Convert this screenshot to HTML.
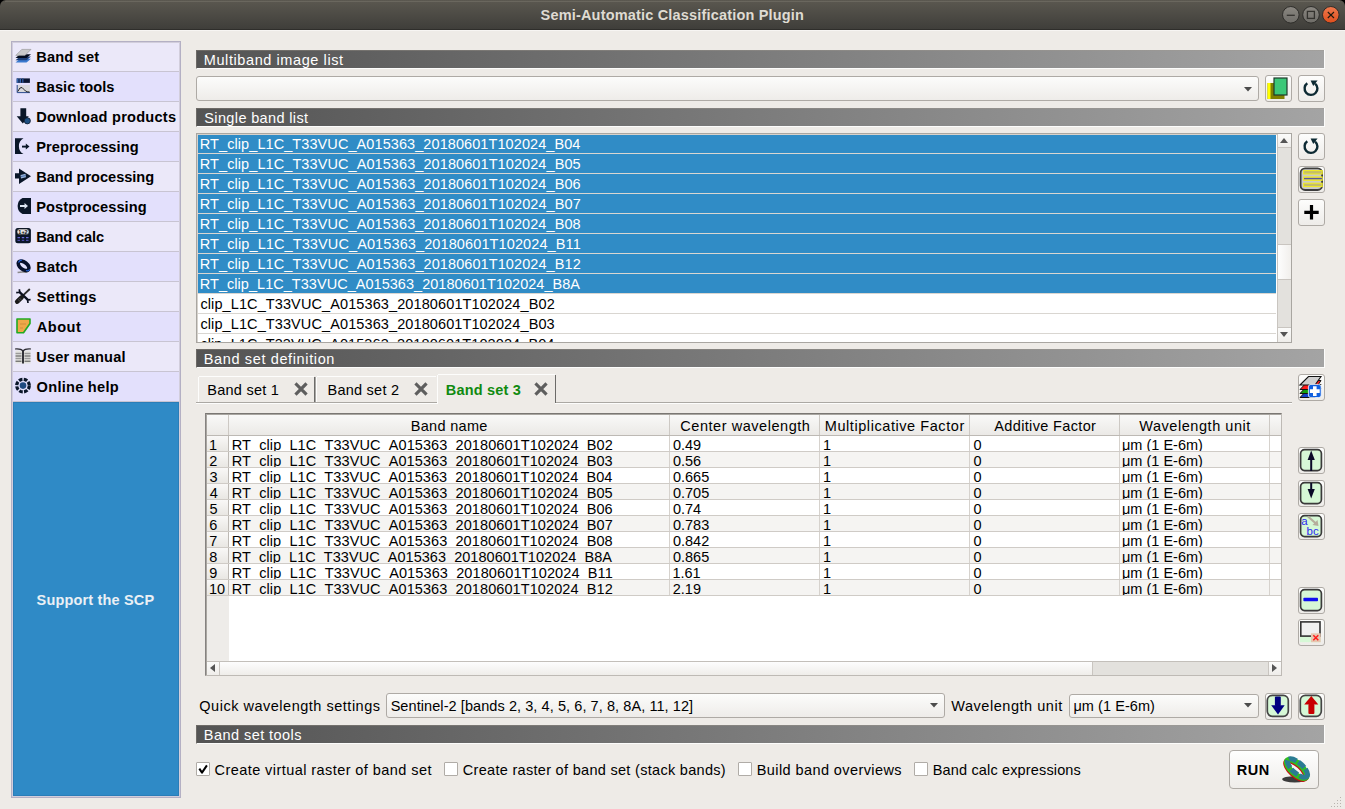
<!DOCTYPE html>
<html><head><meta charset="utf-8"><title>Semi-Automatic Classification Plugin</title>
<style>
html,body{margin:0;padding:0;}
body{width:1345px;height:809px;position:relative;overflow:hidden;background:#eeebe7;font-family:"Liberation Sans",sans-serif;}
.r{position:absolute;}
.t{position:absolute;white-space:nowrap;}
svg.r{overflow:visible;}
</style></head><body>
<div class="r" style="left:0px;top:0px;width:1345px;height:29px;background:linear-gradient(#5b5850,#3f3e3a);border-radius:6px 6px 0 0;"></div>
<div class="r" style="left:0px;top:0px;width:7px;height:7px;background:#000;z-index:-1;"></div>
<div class="r" style="left:1338px;top:0px;width:7px;height:7px;background:#000;z-index:-1;"></div>
<div class="r" style="left:0px;top:29px;width:1345px;height:1px;background:#2f2e2b;"></div>
<div class="r" style="left:0px;top:30px;width:1345px;height:1px;background:#f7f5f3;"></div>
<div class="t" style="left:540.58px;top:6.88px;font-size:14.5px;line-height:16.20px;color:#dfdbd2;font-weight:bold;letter-spacing:0.180px;">Semi-Automatic Classification Plugin</div>
<svg class="r" style="left:1280px;top:4px" width="62" height="22" viewBox="0 0 62 22"><defs><linearGradient id="gg" x1="0" y1="0" x2="0" y2="1"><stop offset="0" stop-color="#8a8781"/><stop offset="1" stop-color="#6e6c67"/></linearGradient><linearGradient id="og" x1="0" y1="0" x2="0" y2="1"><stop offset="0" stop-color="#f07a4e"/><stop offset="1" stop-color="#de4e1c"/></linearGradient></defs><circle cx="10.8" cy="10.8" r="8.3" fill="url(#gg)" stroke="#2e2d2a" stroke-width="1"/><circle cx="31" cy="10.8" r="8.3" fill="url(#gg)" stroke="#2e2d2a" stroke-width="1"/><circle cx="50.8" cy="10.8" r="8.3" fill="url(#og)" stroke="#2e2d2a" stroke-width="1"/><line x1="6.8" y1="11.3" x2="14.8" y2="11.3" stroke="#34332f" stroke-width="1.3"/><rect x="27.4" y="7.4" width="7" height="7" fill="none" stroke="#34332f" stroke-width="1.3"/><path d="M47.8 8 L54 14 M54 8 L47.8 14" stroke="#1e1a10" stroke-width="1.1"/><circle cx="50.9" cy="11" r="1" fill="#1e1a10"/></svg>
<div class="r" style="left:5px;top:1px;width:1335px;height:1px;background:#6a675e;"></div>
<div class="r" style="left:11px;top:41px;width:170px;height:757px;background:#d2cedc;border:1px solid #b4b0c4;box-sizing:border-box;"></div>
<div class="r" style="left:13px;top:402px;width:166px;height:394px;background:#2f8ac6;border:1px solid #2a7db8;box-sizing:border-box;"></div>
<div class="r" style="left:13px;top:43px;width:166px;height:28px;background:#ebe8f9;"></div>
<div class="r" style="left:13px;top:71px;width:166px;height:1px;background:#c8c4d2;"></div>
<div class="t" style="left:36.22px;top:48.79px;font-size:14.6px;line-height:16.31px;color:#000;font-weight:bold;letter-spacing:0.185px;">Band set</div>
<div class="r" style="left:13px;top:72px;width:166px;height:29px;background:#e3e0fc;"></div>
<div class="r" style="left:13px;top:101px;width:166px;height:1px;background:#c8c4d2;"></div>
<div class="t" style="left:36.22px;top:78.79px;font-size:14.6px;line-height:16.31px;color:#000;font-weight:bold;letter-spacing:0.038px;">Basic tools</div>
<div class="r" style="left:13px;top:102px;width:166px;height:29px;background:#ebe8f9;"></div>
<div class="r" style="left:13px;top:131px;width:166px;height:1px;background:#c8c4d2;"></div>
<div class="t" style="left:36.22px;top:108.79px;font-size:14.6px;line-height:16.31px;color:#000;font-weight:bold;letter-spacing:0.226px;">Download products</div>
<div class="r" style="left:13px;top:132px;width:166px;height:29px;background:#e3e0fc;"></div>
<div class="r" style="left:13px;top:161px;width:166px;height:1px;background:#c8c4d2;"></div>
<div class="t" style="left:36.22px;top:138.79px;font-size:14.6px;line-height:16.31px;color:#000;font-weight:bold;letter-spacing:0.085px;">Preprocessing</div>
<div class="r" style="left:13px;top:162px;width:166px;height:29px;background:#ebe8f9;"></div>
<div class="r" style="left:13px;top:191px;width:166px;height:1px;background:#c8c4d2;"></div>
<div class="t" style="left:36.22px;top:168.79px;font-size:14.6px;line-height:16.31px;color:#000;font-weight:bold;letter-spacing:-0.036px;">Band processing</div>
<div class="r" style="left:13px;top:192px;width:166px;height:29px;background:#e3e0fc;"></div>
<div class="r" style="left:13px;top:221px;width:166px;height:1px;background:#c8c4d2;"></div>
<div class="t" style="left:36.22px;top:198.79px;font-size:14.6px;line-height:16.31px;color:#000;font-weight:bold;letter-spacing:0.071px;">Postprocessing</div>
<div class="r" style="left:13px;top:222px;width:166px;height:29px;background:#ebe8f9;"></div>
<div class="r" style="left:13px;top:251px;width:166px;height:1px;background:#c8c4d2;"></div>
<div class="t" style="left:36.22px;top:228.79px;font-size:14.6px;line-height:16.31px;color:#000;font-weight:bold;letter-spacing:-0.146px;">Band calc</div>
<div class="r" style="left:13px;top:252px;width:166px;height:29px;background:#e3e0fc;"></div>
<div class="r" style="left:13px;top:281px;width:166px;height:1px;background:#c8c4d2;"></div>
<div class="t" style="left:36.22px;top:258.79px;font-size:14.6px;line-height:16.31px;color:#000;font-weight:bold;letter-spacing:0.179px;">Batch</div>
<div class="r" style="left:13px;top:282px;width:166px;height:29px;background:#ebe8f9;"></div>
<div class="r" style="left:13px;top:311px;width:166px;height:1px;background:#c8c4d2;"></div>
<div class="t" style="left:36.78px;top:288.79px;font-size:14.6px;line-height:16.31px;color:#000;font-weight:bold;letter-spacing:0.289px;">Settings</div>
<div class="r" style="left:13px;top:312px;width:166px;height:29px;background:#e3e0fc;"></div>
<div class="r" style="left:13px;top:341px;width:166px;height:1px;background:#c8c4d2;"></div>
<div class="t" style="left:36.84px;top:318.79px;font-size:14.6px;line-height:16.31px;color:#000;font-weight:bold;letter-spacing:0.445px;">About</div>
<div class="r" style="left:13px;top:342px;width:166px;height:29px;background:#ebe8f9;"></div>
<div class="r" style="left:13px;top:371px;width:166px;height:1px;background:#c8c4d2;"></div>
<div class="t" style="left:36.32px;top:348.79px;font-size:14.6px;line-height:16.31px;color:#000;font-weight:bold;letter-spacing:0.157px;">User manual</div>
<div class="r" style="left:13px;top:372px;width:166px;height:29px;background:#e3e0fc;"></div>
<div class="r" style="left:13px;top:401px;width:166px;height:1px;background:#c8c4d2;"></div>
<div class="t" style="left:36.60px;top:378.79px;font-size:14.6px;line-height:16.31px;color:#000;font-weight:bold;letter-spacing:0.260px;">Online help</div>
<div class="t" style="left:36.58px;top:591.88px;font-size:14.5px;line-height:16.20px;color:#eaf0f5;font-weight:bold;letter-spacing:0.166px;">Support the SCP</div>
<svg class="r" style="left:15px;top:48px" width="16" height="16" viewBox="0 0 16 16"><path d="M0.5 14.5 L5 10.8 H16 L11.5 14.5 Z" fill="#3a7ad0"/><path d="M0.5 12.3 L5 8.6 H16 L11.5 12.3 Z" fill="#1d3f78"/><path d="M0.5 10 L5 6.3 H16 L11.5 10 Z" fill="#040c1e"/><path d="M0.8 7.4 L6.8 1.4 H16 L10 7.4 Z" fill="#cacaca" stroke="#8e8e8e" stroke-width="0.6"/></svg>
<svg class="r" style="left:15px;top:78px" width="16" height="16" viewBox="0 0 16 16"><rect x="1.7" y="0.4" width="13.2" height="4.5" fill="#0a1530"/><rect x="1.7" y="0.4" width="1.8" height="4.5" fill="#3566b0"/><rect x="4.5" y="0.4" width="1.5" height="4.5" fill="#3566b0"/><rect x="7" y="0.4" width="1.5" height="4.5" fill="#2a5090"/><rect x="1.7" y="7" width="13.2" height="8" fill="#d8d8dc"/><path d="M2.2 7 V14.6 H14.9" fill="none" stroke="#2a4a90" stroke-width="1"/><path d="M2.8 13.5 Q5 8.5 7 9.5 Q9 11.5 10.5 13 Q12 14 14.5 14" fill="none" stroke="#111" stroke-width="0.9"/></svg>
<svg class="r" style="left:15px;top:108px" width="16" height="16" viewBox="0 0 16 16"><path d="M5.4 0.2 H11.2 V8.2 H13.8 L7.8 15.4 L1.7 8.2 H5.4 Z" fill="#0a1628"/><circle cx="12.3" cy="12.8" r="3.1" fill="#1f4f82" stroke="#0a1628" stroke-width="0.8"/></svg>
<svg class="r" style="left:15px;top:138px" width="16" height="16" viewBox="0 0 16 16"><path d="M0 0.3 H8.5 A9 9 0 0 0 8.5 16 H0 Z" fill="#0a1628"/><path d="M7 8.6 H11.5" stroke="#0a1628" stroke-width="1.9"/><path d="M10.8 5.6 L14.5 8.6 L10.8 11.6 Z" fill="#0a1628"/></svg>
<svg class="r" style="left:15px;top:168px" width="16" height="16" viewBox="0 0 16 16"><path d="M0 5.3 H4 V0.4 L16 8.2 L4 16 V10.4 H0 Z" fill="#0a1628"/><path d="M5.5 7 L10.5 5.8 L11 9.2 L6 10.4 Z" fill="#9ab4d8"/><path d="M6 8.6 L10.8 7.5" stroke="#3a64a8" stroke-width="0.8"/></svg>
<svg class="r" style="left:15px;top:198px" width="16" height="16" viewBox="0 0 16 16"><path d="M7.5 0 H16 V16 H7.5 A9 9 0 0 1 7.5 0 Z" fill="#0a1628"/><path d="M5 8 H10" stroke="#dde6f4" stroke-width="2"/><path d="M9.5 5 L13 8 L9.5 11 Z" fill="#dde6f4"/></svg>
<svg class="r" style="left:15px;top:228px" width="16" height="16" viewBox="0 0 16 16"><rect x="0.3" y="0" width="15.6" height="15.3" rx="2.5" fill="#0a1628"/><rect x="2" y="1" width="12" height="5.6" rx="2.5" fill="#e4e4e4" stroke="#222" stroke-width="0.6"/><text x="8" y="5.6" text-anchor="middle" font-family="Liberation Sans" font-weight="bold" font-size="5.5" fill="#111">1+2</text><path d="M2.5 9.6 H5 M6.8 9.6 H9.2 M11 9.6 H13.5" stroke="#6a6ad8" stroke-width="1.2"/><path d="M2.5 12.4 H5 M6.8 12.4 H9.2 M11 12.4 H13.5" stroke="#4a4aa8" stroke-width="1.2"/></svg>
<svg class="r" style="left:15px;top:258px" width="16" height="16" viewBox="0 0 16 16"><path d="M2.6 14.5 Q7 13.6 12.5 14.4" fill="none" stroke="#8a8a8a" stroke-width="1.4"/><ellipse cx="8.6" cy="7.8" rx="6.2" ry="3.6" transform="rotate(38 8.6 7.8)" fill="none" stroke="#08102a" stroke-width="3.6"/><path d="M3.5 4.5 Q4.5 2 7 2.2" fill="none" stroke="#2464d8" stroke-width="1.3"/><path d="M11 12.5 Q13.5 13.5 14.6 11.5" fill="none" stroke="#2464d8" stroke-width="1.2"/></svg>
<svg class="r" style="left:15px;top:288px" width="16" height="16" viewBox="0 0 16 16"><path d="M7.8 7.6 L14.8 1" stroke="#2a2a2a" stroke-width="1.9"/><path d="M4.3 3.8 L13.2 12.2" stroke="#0a0f1e" stroke-width="2.3"/><path d="M1.2 4.6 L4.6 4.3 L4.4 1.2" fill="none" stroke="#0a0f1e" stroke-width="1.7"/><path d="M15.6 11.6 L12.6 12 L13 15" fill="none" stroke="#0a0f1e" stroke-width="1.7"/><path d="M2.2 13.6 L6.6 9.4" stroke="#1a1a1a" stroke-width="4.6" stroke-linecap="round"/><path d="M3.2 11.6 L4.8 13.2 M4.6 10.2 L6.2 11.8" stroke="#777" stroke-width="0.7"/></svg>
<svg class="r" style="left:15px;top:318px" width="16" height="16" viewBox="0 0 16 16"><path d="M2 1 H15 V5.5 L8.5 14.8 H2 Z" fill="#f0a848" stroke="#22aa22" stroke-width="1.6" stroke-linejoin="round"/><path d="M5 6 H11 M5 10 H8" stroke="#c8883a" stroke-width="0.8"/></svg>
<svg class="r" style="left:15px;top:348px" width="16" height="16" viewBox="0 0 16 16"><rect x="0.5" y="2.5" width="15" height="13" fill="#e4e4e0"/><path d="M0.5 5.4 H6.5 M9.5 5.4 H15.5 M0.5 10.4 H6.5 M9.5 10.4 H15.5" stroke="#9a9a9a" stroke-width="1.5"/><path d="M0.5 8 H6.5 M9.5 8 H15.5 M0.5 13.2 H6.5 M9.5 13.2 H15.5" stroke="#3a3a3a" stroke-width="0.9"/><path d="M0 1 Q6 0.5 8 3 Q10 0.5 16 1" fill="none" stroke="#2a2a30" stroke-width="1.2"/><path d="M8 2.5 V15.5" stroke="#2a2a30" stroke-width="1.9"/></svg>
<svg class="r" style="left:15px;top:378px" width="16" height="16" viewBox="0 0 16 16"><circle cx="8" cy="7.6" r="6.3" fill="none" stroke="#0a1628" stroke-width="3.2" stroke-dasharray="3.6 1.35"/><circle cx="8" cy="7.6" r="3.3" fill="#1f4a80"/></svg>
<div class="r" style="left:196px;top:50px;width:1129px;height:19px;background:linear-gradient(90deg,#545454,#a4a4a4);border-left:1px solid #6d6a66;border-bottom:1px solid #fcfcfb;border-right:1px solid #fcfcfb;box-sizing:border-box;"></div>
<div class="r" style="left:196px;top:50px;width:1128px;height:1px;background:linear-gradient(90deg,#6d6a66,#a2a09d);"></div>
<div class="t" style="left:203.81px;top:51.88px;font-size:14.5px;line-height:16.20px;color:#ffffff;letter-spacing:0.587px;">Multiband image list</div>
<div class="r" style="left:196px;top:108px;width:1129px;height:19px;background:linear-gradient(90deg,#545454,#a4a4a4);border-left:1px solid #6d6a66;border-bottom:1px solid #fcfcfb;border-right:1px solid #fcfcfb;box-sizing:border-box;"></div>
<div class="r" style="left:196px;top:108px;width:1128px;height:1px;background:linear-gradient(90deg,#6d6a66,#a2a09d);"></div>
<div class="t" style="left:204.34px;top:109.88px;font-size:14.5px;line-height:16.20px;color:#ffffff;letter-spacing:0.361px;">Single band list</div>
<div class="r" style="left:196px;top:349px;width:1129px;height:19px;background:linear-gradient(90deg,#545454,#a4a4a4);border-left:1px solid #6d6a66;border-bottom:1px solid #fcfcfb;border-right:1px solid #fcfcfb;box-sizing:border-box;"></div>
<div class="r" style="left:196px;top:349px;width:1128px;height:1px;background:linear-gradient(90deg,#6d6a66,#a2a09d);"></div>
<div class="t" style="left:203.81px;top:350.88px;font-size:14.5px;line-height:16.20px;color:#ffffff;letter-spacing:0.629px;">Band set definition</div>
<div class="r" style="left:196px;top:725px;width:1129px;height:19px;background:linear-gradient(90deg,#545454,#a4a4a4);border-left:1px solid #6d6a66;border-bottom:1px solid #fcfcfb;border-right:1px solid #fcfcfb;box-sizing:border-box;"></div>
<div class="r" style="left:196px;top:725px;width:1128px;height:1px;background:linear-gradient(90deg,#6d6a66,#a2a09d);"></div>
<div class="t" style="left:203.81px;top:726.88px;font-size:14.5px;line-height:16.20px;color:#ffffff;letter-spacing:0.448px;">Band set tools</div>
<div class="r" style="left:196px;top:76px;width:1063px;height:25px;border:1px solid #aeaaa5;border-radius:3px;box-sizing:border-box;background:linear-gradient(#fcfcfb,#eeece9);"></div>
<svg class="r" style="left:1244px;top:87px" width="8" height="5" viewBox="0 0 8 5"><path d="M0 0 H8 L4 4.5 Z" fill="#4c4c4c"/></svg>
<div class="r" style="left:1265px;top:75px;width:27px;height:27px;border:1px solid #aeaaa5;border-radius:3px;box-sizing:border-box;background:linear-gradient(#fdfdfc,#eeece9);"></div>
<svg class="r" style="left:1265px;top:75px" width="26" height="26" viewBox="0 0 26 26"><rect x="2.5" y="8" width="17" height="16" fill="#808000"/><rect x="2.5" y="8" width="3" height="16" fill="#ffff00"/><rect x="9" y="3" width="13" height="17" fill="#3cc878" stroke="#1e3a2a" stroke-width="1.2"/></svg>
<div class="r" style="left:1298px;top:75px;width:27px;height:27px;border:1px solid #aeaaa5;border-radius:3px;box-sizing:border-box;background:linear-gradient(#fdfdfc,#eeece9);"></div>
<svg class="r" style="left:1298px;top:75px" width="27" height="27" viewBox="0 0 27 27"><path d="M9.3 8.3 A6.4 6.4 0 1 0 17.1 8.6" fill="none" stroke="#0d2a33" stroke-width="2.4"/><path d="M12.6 5.4 L19.6 5.4 L15.2 11 Z" fill="#0d2a33"/></svg>
<div class="r" style="left:196px;top:133px;width:1096px;height:210px;border:1px solid #a9a6a1;box-sizing:border-box;background:#fff;"></div>
<div class="r" style="left:197px;top:134px;width:1094px;height:1px;background:#d6d2cc;"></div>
<div class="r" style="left:197px;top:134px;width:1px;height:208px;background:#d6d2cc;"></div>
<div class="r" style="left:198px;top:135px;width:1078px;height:207px;overflow:hidden;">
<div class="r" style="left:0px;top:-1px;width:1079px;height:19px;background:#308cc6;"></div>
<div class="r" style="left:0px;top:18px;width:1079px;height:1px;background:#d9d6d1;"></div>
<div class="t" style="left:1.81px;top:0.88px;font-size:14.5px;line-height:16.20px;color:#fff;letter-spacing:0.080px;">RT_clip_L1C_T33VUC_A015363_20180601T102024_B04</div>
<div class="r" style="left:0px;top:19px;width:1079px;height:19px;background:#308cc6;"></div>
<div class="r" style="left:0px;top:38px;width:1079px;height:1px;background:#d9d6d1;"></div>
<div class="t" style="left:1.81px;top:20.88px;font-size:14.5px;line-height:16.20px;color:#fff;letter-spacing:0.084px;">RT_clip_L1C_T33VUC_A015363_20180601T102024_B05</div>
<div class="r" style="left:0px;top:39px;width:1079px;height:19px;background:#308cc6;"></div>
<div class="r" style="left:0px;top:58px;width:1079px;height:1px;background:#d9d6d1;"></div>
<div class="t" style="left:1.81px;top:40.88px;font-size:14.5px;line-height:16.20px;color:#fff;letter-spacing:0.085px;">RT_clip_L1C_T33VUC_A015363_20180601T102024_B06</div>
<div class="r" style="left:0px;top:59px;width:1079px;height:19px;background:#308cc6;"></div>
<div class="r" style="left:0px;top:78px;width:1079px;height:1px;background:#d9d6d1;"></div>
<div class="t" style="left:1.81px;top:60.88px;font-size:14.5px;line-height:16.20px;color:#fff;letter-spacing:0.087px;">RT_clip_L1C_T33VUC_A015363_20180601T102024_B07</div>
<div class="r" style="left:0px;top:79px;width:1079px;height:19px;background:#308cc6;"></div>
<div class="r" style="left:0px;top:98px;width:1079px;height:1px;background:#d9d6d1;"></div>
<div class="t" style="left:1.81px;top:80.88px;font-size:14.5px;line-height:16.20px;color:#fff;letter-spacing:0.084px;">RT_clip_L1C_T33VUC_A015363_20180601T102024_B08</div>
<div class="r" style="left:0px;top:99px;width:1079px;height:19px;background:#308cc6;"></div>
<div class="r" style="left:0px;top:118px;width:1079px;height:1px;background:#d9d6d1;"></div>
<div class="t" style="left:1.81px;top:100.88px;font-size:14.5px;line-height:16.20px;color:#fff;letter-spacing:0.110px;">RT_clip_L1C_T33VUC_A015363_20180601T102024_B11</div>
<div class="r" style="left:0px;top:119px;width:1079px;height:19px;background:#308cc6;"></div>
<div class="r" style="left:0px;top:138px;width:1079px;height:1px;background:#d9d6d1;"></div>
<div class="t" style="left:1.81px;top:120.88px;font-size:14.5px;line-height:16.20px;color:#fff;letter-spacing:0.087px;">RT_clip_L1C_T33VUC_A015363_20180601T102024_B12</div>
<div class="r" style="left:0px;top:139px;width:1079px;height:19px;background:#308cc6;"></div>
<div class="r" style="left:0px;top:158px;width:1079px;height:1px;background:#d9d6d1;"></div>
<div class="t" style="left:1.81px;top:140.88px;font-size:14.5px;line-height:16.20px;color:#fff;letter-spacing:0.035px;">RT_clip_L1C_T33VUC_A015363_20180601T102024_B8A</div>
<div class="r" style="left:0px;top:178px;width:1079px;height:1px;background:#d9d6d1;"></div>
<div class="t" style="left:2.38px;top:160.88px;font-size:14.5px;line-height:16.20px;color:#000;letter-spacing:0.106px;">clip_L1C_T33VUC_A015363_20180601T102024_B02</div>
<div class="r" style="left:0px;top:198px;width:1079px;height:1px;background:#d9d6d1;"></div>
<div class="t" style="left:2.38px;top:180.88px;font-size:14.5px;line-height:16.20px;color:#000;letter-spacing:0.104px;">clip_L1C_T33VUC_A015363_20180601T102024_B03</div>
<div class="r" style="left:0px;top:218px;width:1079px;height:1px;background:#d9d6d1;"></div>
<div class="t" style="left:2.38px;top:200.88px;font-size:14.5px;line-height:16.20px;color:#000;letter-spacing:0.099px;">clip_L1C_T33VUC_A015363_20180601T102024_B04</div>
</div>
<div class="r" style="left:1277px;top:134px;width:14px;height:208px;background:#e3e1dd;border-left:1px solid #c9c5c0;box-sizing:border-box;"></div>
<div class="r" style="left:1277px;top:134px;width:14px;height:14px;background:linear-gradient(#fbfbfa,#efedea);border-left:1px solid #c9c5c0;border-bottom:1px solid #c9c5c0;box-sizing:border-box;"></div>
<div class="r" style="left:1277px;top:327px;width:14px;height:15px;background:linear-gradient(#fbfbfa,#efedea);border-left:1px solid #c9c5c0;border-top:1px solid #c9c5c0;box-sizing:border-box;"></div>
<div class="r" style="left:1277px;top:244px;width:14px;height:36px;background:linear-gradient(90deg,#fdfdfd,#f1efec);border:1px solid #c9c5c0;border-right:none;box-sizing:border-box;"></div>
<svg class="r" style="left:1280px;top:138px" width="9" height="6" viewBox="0 0 9 6"><path d="M0 5 H8 L4 0 Z" fill="#555"/></svg>
<svg class="r" style="left:1280px;top:332px" width="9" height="6" viewBox="0 0 9 6"><path d="M0 0 H8 L4 5 Z" fill="#555"/></svg>
<div class="r" style="left:1298px;top:133px;width:27px;height:27px;border:1px solid #aeaaa5;border-radius:3px;box-sizing:border-box;background:linear-gradient(#fdfdfc,#eeece9);"></div>
<svg class="r" style="left:1298px;top:133px" width="27" height="27" viewBox="0 0 27 27"><path d="M9.3 8.3 A6.4 6.4 0 1 0 17.1 8.6" fill="none" stroke="#0d2a33" stroke-width="2.4"/><path d="M12.6 5.4 L19.6 5.4 L15.2 11 Z" fill="#0d2a33"/></svg>
<div class="r" style="left:1298px;top:166px;width:27px;height:27px;border:1px solid #aeaaa5;border-radius:3px;box-sizing:border-box;background:linear-gradient(#fdfdfc,#eeece9);"></div>
<svg class="r" style="left:1298px;top:166px" width="27" height="27" viewBox="0 0 27 27"><rect x="2.6" y="2.4" width="21.5" height="21.6" rx="4.5" fill="#cacaca" stroke="#3c3c3c" stroke-width="1.8"/><rect x="5.6" y="4.6" width="18.6" height="3.4" fill="#c4bd6a" stroke="#f2ee1e" stroke-width="1"/><rect x="5.6" y="10.9" width="18.6" height="3.4" fill="#c4bd6a" stroke="#f2ee1e" stroke-width="1"/><rect x="5.6" y="17.2" width="18.6" height="3.4" fill="#c4bd6a" stroke="#f2ee1e" stroke-width="1"/><path d="M6 12.6 H24" stroke="#3030b0" stroke-width="0.8"/></svg>
<div class="r" style="left:1298px;top:199px;width:27px;height:27px;border:1px solid #aeaaa5;border-radius:3px;box-sizing:border-box;background:linear-gradient(#fdfdfc,#eeece9);"></div>
<svg class="r" style="left:1298px;top:199px" width="27" height="27" viewBox="0 0 27 27"><path d="M13.5 6 V20.5 M6.3 13.3 H20.7" stroke="#000" stroke-width="3.2"/></svg>
<div class="r" style="left:196px;top:402px;width:241px;height:1px;background:#aba8a3;"></div>
<div class="r" style="left:196px;top:403px;width:241px;height:1px;background:#fdfdfc;"></div>
<div class="r" style="left:555px;top:402px;width:737px;height:1px;background:#aba8a3;"></div>
<div class="r" style="left:555px;top:403px;width:737px;height:1px;background:#fdfdfc;"></div>
<div class="r" style="left:199px;top:376px;width:115px;height:1px;background:#fdfdfc;"></div>
<div class="r" style="left:198px;top:377px;width:1px;height:25px;background:#fdfdfc;"></div>
<div class="r" style="left:314px;top:377px;width:1px;height:25px;background:#6c6b69;"></div>
<div class="r" style="left:315px;top:377px;width:1px;height:25px;background:#a9a7a4;"></div>
<div class="r" style="left:317px;top:376px;width:119px;height:1px;background:#fdfdfc;"></div>
<div class="r" style="left:316px;top:377px;width:1px;height:25px;background:#fdfdfc;"></div>
<div class="r" style="left:438px;top:374px;width:117px;height:1px;background:#fdfdfc;"></div>
<div class="r" style="left:437px;top:375px;width:1px;height:29px;background:#fdfdfc;"></div>
<div class="r" style="left:555px;top:375px;width:1px;height:28px;background:#6c6b69;"></div>
<div class="t" style="left:207.31px;top:381.88px;font-size:14.5px;line-height:16.20px;color:#000;letter-spacing:0.241px;">Band set 1</div>
<div class="t" style="left:327.51px;top:381.88px;font-size:14.5px;line-height:16.20px;color:#000;letter-spacing:0.244px;">Band set 2</div>
<div class="t" style="left:445.83px;top:381.88px;font-size:14.5px;line-height:16.20px;color:#108a10;font-weight:bold;letter-spacing:0.174px;">Band set 3</div>
<svg class="r" style="left:295px;top:383px" width="12" height="12" viewBox="0 0 12 12"><path d="M1.6 1.6 L10.4 10.4 M10.4 1.6 L1.6 10.4" stroke="#5e5e5e" stroke-width="3.2" stroke-linecap="square"/></svg>
<svg class="r" style="left:415px;top:383px" width="12" height="12" viewBox="0 0 12 12"><path d="M1.6 1.6 L10.4 10.4 M10.4 1.6 L1.6 10.4" stroke="#5e5e5e" stroke-width="3.2" stroke-linecap="square"/></svg>
<svg class="r" style="left:535px;top:383px" width="12" height="12" viewBox="0 0 12 12"><path d="M1.6 1.6 L10.4 10.4 M10.4 1.6 L1.6 10.4" stroke="#5e5e5e" stroke-width="3.2" stroke-linecap="square"/></svg>
<div class="r" style="left:1298px;top:374px;width:27px;height:27px;border:1px solid #aeaaa5;border-radius:3px;box-sizing:border-box;background:linear-gradient(#fdfdfc,#eeece9);"></div>
<svg class="r" style="left:1298px;top:374px" width="26" height="27" viewBox="0 0 26 27"><path d="M2 23.5 L10.5 14.5 H23 L17 23.5 Z" fill="#1040c8" stroke="#111" stroke-width="1"/><path d="M2 19.5 L10.5 10.5 H23 L17 19.5 Z" fill="#10a010" stroke="#111" stroke-width="1"/><path d="M2 15.5 L10.5 6.5 H23 L17 15.5 Z" fill="#ff1a1a" stroke="#111" stroke-width="1"/><path d="M2 11 L10.5 2.5 H23 L17 11 Z" fill="#d0d0d0" stroke="#111" stroke-width="1.1"/><rect x="10.4" y="10.4" width="12.8" height="13.2" rx="2.5" fill="#1060e0" stroke="#fff" stroke-width="0.8"/><path d="M16.8 12.2 V22 M11.9 17.1 H21.7" stroke="#fff" stroke-width="3.6"/></svg>
<div class="r" style="left:205px;top:413px;width:1077px;height:263px;border:1px solid #858280;border-top-color:#7a7773;border-right-color:#bebab5;border-bottom-color:#bebab5;box-sizing:border-box;background:#fff;"></div>
<div class="r" style="left:206px;top:414px;width:1075px;height:1px;background:#a9a6a1;"></div>
<div class="r" style="left:206px;top:414px;width:1px;height:261px;background:#a9a6a1;"></div>
<div class="r" style="left:207px;top:415px;width:1074px;height:20px;background:linear-gradient(#f9f9f8,#ebe9e6);"></div>
<div class="r" style="left:207px;top:435px;width:1074px;height:1px;background:#bdb9b4;"></div>
<div class="r" style="left:228px;top:415px;width:1px;height:20px;background:#cdc9c4;"></div>
<div class="r" style="left:669px;top:415px;width:1px;height:20px;background:#cdc9c4;"></div>
<div class="r" style="left:819px;top:415px;width:1px;height:20px;background:#cdc9c4;"></div>
<div class="r" style="left:969px;top:415px;width:1px;height:20px;background:#cdc9c4;"></div>
<div class="r" style="left:1119px;top:415px;width:1px;height:20px;background:#cdc9c4;"></div>
<div class="r" style="left:1269px;top:415px;width:1px;height:20px;background:#cdc9c4;"></div>
<div class="t" style="left:410.81px;top:417.88px;font-size:14.5px;line-height:16.20px;color:#000;letter-spacing:0.296px;">Band name</div>
<div class="t" style="left:680.26px;top:417.88px;font-size:14.5px;line-height:16.20px;color:#000;letter-spacing:0.548px;">Center wavelength</div>
<div class="t" style="left:824.81px;top:417.88px;font-size:14.5px;line-height:16.20px;color:#000;letter-spacing:0.565px;">Multiplicative Factor</div>
<div class="t" style="left:994.27px;top:417.88px;font-size:14.5px;line-height:16.20px;color:#000;letter-spacing:0.354px;">Additive Factor</div>
<div class="t" style="left:1139.24px;top:417.88px;font-size:14.5px;line-height:16.20px;color:#000;letter-spacing:0.552px;">Wavelength unit</div>
<div class="r" style="left:207px;top:436px;width:22px;height:225px;background:#eeece9;"></div>
<div class="r" style="left:228px;top:436px;width:1px;height:160px;background:#bdb9b4;"></div>
<div class="r" style="left:207px;top:436px;width:1074px;height:225px;overflow:hidden;">
<div class="r" style="left:22px;top:0px;width:1052px;height:15px;background:#ffffff;"></div>
<div class="r" style="left:0px;top:0px;width:21px;height:15px;background:linear-gradient(#f9f8f7,#e9e7e3);"></div>
<div class="r" style="left:0px;top:15px;width:1074px;height:1px;background:#cfcbc6;"></div>
<div class="r" style="left:462px;top:0px;width:1px;height:15px;background:#d6d2cd;"></div>
<div class="r" style="left:612px;top:0px;width:1px;height:15px;background:#d6d2cd;"></div>
<div class="r" style="left:762px;top:0px;width:1px;height:15px;background:#d6d2cd;"></div>
<div class="r" style="left:912px;top:0px;width:1px;height:15px;background:#d6d2cd;"></div>
<div class="r" style="left:1062px;top:0px;width:1px;height:15px;background:#d6d2cd;"></div>
<div class="r" style="left:0;top:0px;width:1074px;height:15px;overflow:hidden;">
<div class="t" style="left:1.90px;top:0.88px;font-size:14.5px;line-height:16.20px;color:#000;">1</div>
<div class="t" style="left:24.81px;top:0.88px;font-size:14.5px;line-height:16.20px;color:#000;letter-spacing:0.087px;">RT_clip_L1C_T33VUC_A015363_20180601T102024_B02</div>
<div class="t" style="left:465.93px;top:0.88px;font-size:14.5px;line-height:16.20px;color:#000;">0.49</div>
<div class="t" style="left:615.90px;top:0.88px;font-size:14.5px;line-height:16.20px;color:#000;">1</div>
<div class="t" style="left:766.43px;top:0.88px;font-size:14.5px;line-height:16.20px;color:#000;">0</div>
<div class="t" style="left:915.02px;top:0.88px;font-size:14.5px;line-height:16.20px;color:#000;">μm (1 E-6m)</div>
</div>
<div class="r" style="left:22px;top:16px;width:1052px;height:15px;background:#f5f4f2;"></div>
<div class="r" style="left:0px;top:16px;width:21px;height:15px;background:linear-gradient(#f9f8f7,#e9e7e3);"></div>
<div class="r" style="left:0px;top:31px;width:1074px;height:1px;background:#cfcbc6;"></div>
<div class="r" style="left:462px;top:16px;width:1px;height:15px;background:#d6d2cd;"></div>
<div class="r" style="left:612px;top:16px;width:1px;height:15px;background:#d6d2cd;"></div>
<div class="r" style="left:762px;top:16px;width:1px;height:15px;background:#d6d2cd;"></div>
<div class="r" style="left:912px;top:16px;width:1px;height:15px;background:#d6d2cd;"></div>
<div class="r" style="left:1062px;top:16px;width:1px;height:15px;background:#d6d2cd;"></div>
<div class="r" style="left:0;top:16px;width:1074px;height:15px;overflow:hidden;">
<div class="t" style="left:2.27px;top:0.88px;font-size:14.5px;line-height:16.20px;color:#000;">2</div>
<div class="t" style="left:24.81px;top:0.88px;font-size:14.5px;line-height:16.20px;color:#000;letter-spacing:0.085px;">RT_clip_L1C_T33VUC_A015363_20180601T102024_B03</div>
<div class="t" style="left:465.93px;top:0.88px;font-size:14.5px;line-height:16.20px;color:#000;">0.56</div>
<div class="t" style="left:615.90px;top:0.88px;font-size:14.5px;line-height:16.20px;color:#000;">1</div>
<div class="t" style="left:766.43px;top:0.88px;font-size:14.5px;line-height:16.20px;color:#000;">0</div>
<div class="t" style="left:915.02px;top:0.88px;font-size:14.5px;line-height:16.20px;color:#000;">μm (1 E-6m)</div>
</div>
<div class="r" style="left:22px;top:32px;width:1052px;height:15px;background:#ffffff;"></div>
<div class="r" style="left:0px;top:32px;width:21px;height:15px;background:linear-gradient(#f9f8f7,#e9e7e3);"></div>
<div class="r" style="left:0px;top:47px;width:1074px;height:1px;background:#cfcbc6;"></div>
<div class="r" style="left:462px;top:32px;width:1px;height:15px;background:#d6d2cd;"></div>
<div class="r" style="left:612px;top:32px;width:1px;height:15px;background:#d6d2cd;"></div>
<div class="r" style="left:762px;top:32px;width:1px;height:15px;background:#d6d2cd;"></div>
<div class="r" style="left:912px;top:32px;width:1px;height:15px;background:#d6d2cd;"></div>
<div class="r" style="left:1062px;top:32px;width:1px;height:15px;background:#d6d2cd;"></div>
<div class="r" style="left:0;top:32px;width:1074px;height:15px;overflow:hidden;">
<div class="t" style="left:2.45px;top:0.88px;font-size:14.5px;line-height:16.20px;color:#000;">3</div>
<div class="t" style="left:24.81px;top:0.88px;font-size:14.5px;line-height:16.20px;color:#000;letter-spacing:0.080px;">RT_clip_L1C_T33VUC_A015363_20180601T102024_B04</div>
<div class="t" style="left:465.93px;top:0.88px;font-size:14.5px;line-height:16.20px;color:#000;">0.665</div>
<div class="t" style="left:615.90px;top:0.88px;font-size:14.5px;line-height:16.20px;color:#000;">1</div>
<div class="t" style="left:766.43px;top:0.88px;font-size:14.5px;line-height:16.20px;color:#000;">0</div>
<div class="t" style="left:915.02px;top:0.88px;font-size:14.5px;line-height:16.20px;color:#000;">μm (1 E-6m)</div>
</div>
<div class="r" style="left:22px;top:48px;width:1052px;height:15px;background:#f5f4f2;"></div>
<div class="r" style="left:0px;top:48px;width:21px;height:15px;background:linear-gradient(#f9f8f7,#e9e7e3);"></div>
<div class="r" style="left:0px;top:63px;width:1074px;height:1px;background:#cfcbc6;"></div>
<div class="r" style="left:462px;top:48px;width:1px;height:15px;background:#d6d2cd;"></div>
<div class="r" style="left:612px;top:48px;width:1px;height:15px;background:#d6d2cd;"></div>
<div class="r" style="left:762px;top:48px;width:1px;height:15px;background:#d6d2cd;"></div>
<div class="r" style="left:912px;top:48px;width:1px;height:15px;background:#d6d2cd;"></div>
<div class="r" style="left:1062px;top:48px;width:1px;height:15px;background:#d6d2cd;"></div>
<div class="r" style="left:0;top:48px;width:1074px;height:15px;overflow:hidden;">
<div class="t" style="left:2.67px;top:0.88px;font-size:14.5px;line-height:16.20px;color:#000;">4</div>
<div class="t" style="left:24.81px;top:0.88px;font-size:14.5px;line-height:16.20px;color:#000;letter-spacing:0.084px;">RT_clip_L1C_T33VUC_A015363_20180601T102024_B05</div>
<div class="t" style="left:465.93px;top:0.88px;font-size:14.5px;line-height:16.20px;color:#000;">0.705</div>
<div class="t" style="left:615.90px;top:0.88px;font-size:14.5px;line-height:16.20px;color:#000;">1</div>
<div class="t" style="left:766.43px;top:0.88px;font-size:14.5px;line-height:16.20px;color:#000;">0</div>
<div class="t" style="left:915.02px;top:0.88px;font-size:14.5px;line-height:16.20px;color:#000;">μm (1 E-6m)</div>
</div>
<div class="r" style="left:22px;top:64px;width:1052px;height:15px;background:#ffffff;"></div>
<div class="r" style="left:0px;top:64px;width:21px;height:15px;background:linear-gradient(#f9f8f7,#e9e7e3);"></div>
<div class="r" style="left:0px;top:79px;width:1074px;height:1px;background:#cfcbc6;"></div>
<div class="r" style="left:462px;top:64px;width:1px;height:15px;background:#d6d2cd;"></div>
<div class="r" style="left:612px;top:64px;width:1px;height:15px;background:#d6d2cd;"></div>
<div class="r" style="left:762px;top:64px;width:1px;height:15px;background:#d6d2cd;"></div>
<div class="r" style="left:912px;top:64px;width:1px;height:15px;background:#d6d2cd;"></div>
<div class="r" style="left:1062px;top:64px;width:1px;height:15px;background:#d6d2cd;"></div>
<div class="r" style="left:0;top:64px;width:1074px;height:15px;overflow:hidden;">
<div class="t" style="left:2.42px;top:0.88px;font-size:14.5px;line-height:16.20px;color:#000;">5</div>
<div class="t" style="left:24.81px;top:0.88px;font-size:14.5px;line-height:16.20px;color:#000;letter-spacing:0.085px;">RT_clip_L1C_T33VUC_A015363_20180601T102024_B06</div>
<div class="t" style="left:465.93px;top:0.88px;font-size:14.5px;line-height:16.20px;color:#000;">0.74</div>
<div class="t" style="left:615.90px;top:0.88px;font-size:14.5px;line-height:16.20px;color:#000;">1</div>
<div class="t" style="left:766.43px;top:0.88px;font-size:14.5px;line-height:16.20px;color:#000;">0</div>
<div class="t" style="left:915.02px;top:0.88px;font-size:14.5px;line-height:16.20px;color:#000;">μm (1 E-6m)</div>
</div>
<div class="r" style="left:22px;top:80px;width:1052px;height:15px;background:#f5f4f2;"></div>
<div class="r" style="left:0px;top:80px;width:21px;height:15px;background:linear-gradient(#f9f8f7,#e9e7e3);"></div>
<div class="r" style="left:0px;top:95px;width:1074px;height:1px;background:#cfcbc6;"></div>
<div class="r" style="left:462px;top:80px;width:1px;height:15px;background:#d6d2cd;"></div>
<div class="r" style="left:612px;top:80px;width:1px;height:15px;background:#d6d2cd;"></div>
<div class="r" style="left:762px;top:80px;width:1px;height:15px;background:#d6d2cd;"></div>
<div class="r" style="left:912px;top:80px;width:1px;height:15px;background:#d6d2cd;"></div>
<div class="r" style="left:1062px;top:80px;width:1px;height:15px;background:#d6d2cd;"></div>
<div class="r" style="left:0;top:80px;width:1074px;height:15px;overflow:hidden;">
<div class="t" style="left:2.26px;top:0.88px;font-size:14.5px;line-height:16.20px;color:#000;">6</div>
<div class="t" style="left:24.81px;top:0.88px;font-size:14.5px;line-height:16.20px;color:#000;letter-spacing:0.087px;">RT_clip_L1C_T33VUC_A015363_20180601T102024_B07</div>
<div class="t" style="left:465.93px;top:0.88px;font-size:14.5px;line-height:16.20px;color:#000;">0.783</div>
<div class="t" style="left:615.90px;top:0.88px;font-size:14.5px;line-height:16.20px;color:#000;">1</div>
<div class="t" style="left:766.43px;top:0.88px;font-size:14.5px;line-height:16.20px;color:#000;">0</div>
<div class="t" style="left:915.02px;top:0.88px;font-size:14.5px;line-height:16.20px;color:#000;">μm (1 E-6m)</div>
</div>
<div class="r" style="left:22px;top:96px;width:1052px;height:15px;background:#ffffff;"></div>
<div class="r" style="left:0px;top:96px;width:21px;height:15px;background:linear-gradient(#f9f8f7,#e9e7e3);"></div>
<div class="r" style="left:0px;top:111px;width:1074px;height:1px;background:#cfcbc6;"></div>
<div class="r" style="left:462px;top:96px;width:1px;height:15px;background:#d6d2cd;"></div>
<div class="r" style="left:612px;top:96px;width:1px;height:15px;background:#d6d2cd;"></div>
<div class="r" style="left:762px;top:96px;width:1px;height:15px;background:#d6d2cd;"></div>
<div class="r" style="left:912px;top:96px;width:1px;height:15px;background:#d6d2cd;"></div>
<div class="r" style="left:1062px;top:96px;width:1px;height:15px;background:#d6d2cd;"></div>
<div class="r" style="left:0;top:96px;width:1074px;height:15px;overflow:hidden;">
<div class="t" style="left:2.26px;top:0.88px;font-size:14.5px;line-height:16.20px;color:#000;">7</div>
<div class="t" style="left:24.81px;top:0.88px;font-size:14.5px;line-height:16.20px;color:#000;letter-spacing:0.084px;">RT_clip_L1C_T33VUC_A015363_20180601T102024_B08</div>
<div class="t" style="left:465.93px;top:0.88px;font-size:14.5px;line-height:16.20px;color:#000;">0.842</div>
<div class="t" style="left:615.90px;top:0.88px;font-size:14.5px;line-height:16.20px;color:#000;">1</div>
<div class="t" style="left:766.43px;top:0.88px;font-size:14.5px;line-height:16.20px;color:#000;">0</div>
<div class="t" style="left:915.02px;top:0.88px;font-size:14.5px;line-height:16.20px;color:#000;">μm (1 E-6m)</div>
</div>
<div class="r" style="left:22px;top:112px;width:1052px;height:15px;background:#f5f4f2;"></div>
<div class="r" style="left:0px;top:112px;width:21px;height:15px;background:linear-gradient(#f9f8f7,#e9e7e3);"></div>
<div class="r" style="left:0px;top:127px;width:1074px;height:1px;background:#cfcbc6;"></div>
<div class="r" style="left:462px;top:112px;width:1px;height:15px;background:#d6d2cd;"></div>
<div class="r" style="left:612px;top:112px;width:1px;height:15px;background:#d6d2cd;"></div>
<div class="r" style="left:762px;top:112px;width:1px;height:15px;background:#d6d2cd;"></div>
<div class="r" style="left:912px;top:112px;width:1px;height:15px;background:#d6d2cd;"></div>
<div class="r" style="left:1062px;top:112px;width:1px;height:15px;background:#d6d2cd;"></div>
<div class="r" style="left:0;top:112px;width:1074px;height:15px;overflow:hidden;">
<div class="t" style="left:2.37px;top:0.88px;font-size:14.5px;line-height:16.20px;color:#000;">8</div>
<div class="t" style="left:24.81px;top:0.88px;font-size:14.5px;line-height:16.20px;color:#000;letter-spacing:0.035px;">RT_clip_L1C_T33VUC_A015363_20180601T102024_B8A</div>
<div class="t" style="left:465.93px;top:0.88px;font-size:14.5px;line-height:16.20px;color:#000;">0.865</div>
<div class="t" style="left:615.90px;top:0.88px;font-size:14.5px;line-height:16.20px;color:#000;">1</div>
<div class="t" style="left:766.43px;top:0.88px;font-size:14.5px;line-height:16.20px;color:#000;">0</div>
<div class="t" style="left:915.02px;top:0.88px;font-size:14.5px;line-height:16.20px;color:#000;">μm (1 E-6m)</div>
</div>
<div class="r" style="left:22px;top:128px;width:1052px;height:15px;background:#ffffff;"></div>
<div class="r" style="left:0px;top:128px;width:21px;height:15px;background:linear-gradient(#f9f8f7,#e9e7e3);"></div>
<div class="r" style="left:0px;top:143px;width:1074px;height:1px;background:#cfcbc6;"></div>
<div class="r" style="left:462px;top:128px;width:1px;height:15px;background:#d6d2cd;"></div>
<div class="r" style="left:612px;top:128px;width:1px;height:15px;background:#d6d2cd;"></div>
<div class="r" style="left:762px;top:128px;width:1px;height:15px;background:#d6d2cd;"></div>
<div class="r" style="left:912px;top:128px;width:1px;height:15px;background:#d6d2cd;"></div>
<div class="r" style="left:1062px;top:128px;width:1px;height:15px;background:#d6d2cd;"></div>
<div class="r" style="left:0;top:128px;width:1074px;height:15px;overflow:hidden;">
<div class="t" style="left:2.32px;top:0.88px;font-size:14.5px;line-height:16.20px;color:#000;">9</div>
<div class="t" style="left:24.81px;top:0.88px;font-size:14.5px;line-height:16.20px;color:#000;letter-spacing:0.110px;">RT_clip_L1C_T33VUC_A015363_20180601T102024_B11</div>
<div class="t" style="left:465.40px;top:0.88px;font-size:14.5px;line-height:16.20px;color:#000;">1.61</div>
<div class="t" style="left:615.90px;top:0.88px;font-size:14.5px;line-height:16.20px;color:#000;">1</div>
<div class="t" style="left:766.43px;top:0.88px;font-size:14.5px;line-height:16.20px;color:#000;">0</div>
<div class="t" style="left:915.02px;top:0.88px;font-size:14.5px;line-height:16.20px;color:#000;">μm (1 E-6m)</div>
</div>
<div class="r" style="left:22px;top:144px;width:1052px;height:15px;background:#f5f4f2;"></div>
<div class="r" style="left:0px;top:144px;width:21px;height:15px;background:linear-gradient(#f9f8f7,#e9e7e3);"></div>
<div class="r" style="left:0px;top:159px;width:1074px;height:1px;background:#cfcbc6;"></div>
<div class="r" style="left:462px;top:144px;width:1px;height:15px;background:#d6d2cd;"></div>
<div class="r" style="left:612px;top:144px;width:1px;height:15px;background:#d6d2cd;"></div>
<div class="r" style="left:762px;top:144px;width:1px;height:15px;background:#d6d2cd;"></div>
<div class="r" style="left:912px;top:144px;width:1px;height:15px;background:#d6d2cd;"></div>
<div class="r" style="left:1062px;top:144px;width:1px;height:15px;background:#d6d2cd;"></div>
<div class="r" style="left:0;top:144px;width:1074px;height:15px;overflow:hidden;">
<div class="t" style="left:1.90px;top:0.88px;font-size:14.5px;line-height:16.20px;color:#000;">10</div>
<div class="t" style="left:24.81px;top:0.88px;font-size:14.5px;line-height:16.20px;color:#000;letter-spacing:0.087px;">RT_clip_L1C_T33VUC_A015363_20180601T102024_B12</div>
<div class="t" style="left:465.77px;top:0.88px;font-size:14.5px;line-height:16.20px;color:#000;">2.19</div>
<div class="t" style="left:615.90px;top:0.88px;font-size:14.5px;line-height:16.20px;color:#000;">1</div>
<div class="t" style="left:766.43px;top:0.88px;font-size:14.5px;line-height:16.20px;color:#000;">0</div>
<div class="t" style="left:915.02px;top:0.88px;font-size:14.5px;line-height:16.20px;color:#000;">μm (1 E-6m)</div>
</div>
</div>
<div class="r" style="left:207px;top:661px;width:1074px;height:14px;background:#e3e1dd;border-top:1px solid #c3bfba;box-sizing:border-box;"></div>
<div class="r" style="left:207px;top:661px;width:13px;height:14px;background:linear-gradient(#fbfbfa,#efedea);border-top:1px solid #c3bfba;border-right:1px solid #c9c5c0;box-sizing:border-box;"></div>
<div class="r" style="left:220px;top:661px;width:873px;height:14px;background:linear-gradient(#fdfdfd,#efedea);border-top:1px solid #c3bfba;border-right:1px solid #c9c5c0;box-sizing:border-box;"></div>
<div class="r" style="left:1268px;top:661px;width:13px;height:14px;background:linear-gradient(#fbfbfa,#efedea);border-top:1px solid #c3bfba;border-left:1px solid #c9c5c0;box-sizing:border-box;"></div>
<svg class="r" style="left:210px;top:664px" width="6" height="9" viewBox="0 0 6 9"><path d="M5 0 V8 L0 4 Z" fill="#555"/></svg>
<svg class="r" style="left:1272px;top:664px" width="6" height="9" viewBox="0 0 6 9"><path d="M0 0 V8 L5 4 Z" fill="#555"/></svg>
<div class="r" style="left:1298px;top:447px;width:27px;height:27px;border:1px solid #aeaaa5;border-radius:3px;box-sizing:border-box;background:linear-gradient(#fdfdfc,#eeece9);"></div>
<svg class="r" style="left:1298px;top:447px" width="27" height="27" viewBox="0 0 27 27"><rect x="2.6" y="2.6" width="20.8" height="21" rx="4" fill="#d6f8d6" stroke="#3a3a3a" stroke-width="1.7"/><rect x="12.2" y="11" width="2" height="13" fill="#0a0a28"/><path d="M9.6 13 L13.2 3.6 L16.8 13 Z" fill="#0a0a28"/></svg>
<div class="r" style="left:1298px;top:480px;width:27px;height:27px;border:1px solid #aeaaa5;border-radius:3px;box-sizing:border-box;background:linear-gradient(#fdfdfc,#eeece9);"></div>
<svg class="r" style="left:1298px;top:480px" width="27" height="27" viewBox="0 0 27 27"><rect x="2.6" y="2.6" width="20.8" height="21" rx="4" fill="#d6f8d6" stroke="#3a3a3a" stroke-width="1.7"/><rect x="12.2" y="3" width="2" height="9" fill="#0a0a28"/><path d="M9.6 9 L13.2 18.4 L16.8 9 Z" fill="#0a0a28"/></svg>
<div class="r" style="left:1298px;top:513px;width:27px;height:27px;border:1px solid #aeaaa5;border-radius:3px;box-sizing:border-box;background:linear-gradient(#fdfdfc,#eeece9);"></div>
<svg class="r" style="left:1298px;top:513px" width="27" height="27" viewBox="0 0 27 27"><rect x="2.6" y="2.6" width="20.8" height="21" rx="4" fill="#d6f8d6" stroke="#3a3a3a" stroke-width="1.7"/><path d="M10 3.5 L18.5 11" stroke="#b5ad9c" stroke-width="2.2"/><path d="M14.5 12 L20.5 13 L19.5 7 Z" fill="#b5ad9c"/><text x="3.2" y="12" font-family="Liberation Sans" font-size="11.5" fill="#2a2af0">a</text><text x="8.6" y="22.2" font-family="Liberation Sans" font-size="11.5" fill="#2a2af0">bc</text></svg>
<div class="r" style="left:1298px;top:587px;width:27px;height:27px;border:1px solid #aeaaa5;border-radius:3px;box-sizing:border-box;background:linear-gradient(#fdfdfc,#eeece9);"></div>
<svg class="r" style="left:1298px;top:587px" width="27" height="27" viewBox="0 0 27 27"><rect x="2.6" y="2.6" width="20.8" height="21" rx="4" fill="#d6f8d6" stroke="#3a3a3a" stroke-width="1.7"/><rect x="5.4" y="10.8" width="14.6" height="3.5" rx="0.8" fill="#1010f0"/></svg>
<div class="r" style="left:1298px;top:619px;width:27px;height:27px;border:1px solid #aeaaa5;border-radius:3px;box-sizing:border-box;background:linear-gradient(#fdfdfc,#eeece9);"></div>
<svg class="r" style="left:1298px;top:619px" width="27" height="27" viewBox="0 0 27 27"><rect x="2" y="17.4" width="20.7" height="5.8" fill="#d6f8d6"/><rect x="2.8" y="2.9" width="19.2" height="14.2" fill="#f0f0f0" stroke="#333" stroke-width="1.6"/><rect x="13" y="14.3" width="9.7" height="8.9" fill="#e6c6b0"/><path d="M15.3 16.3 L20.3 21.3 M20.3 16.3 L15.3 21.3" stroke="#ff1a1a" stroke-width="1.5"/></svg>
<div class="t" style="left:199.31px;top:697.88px;font-size:14.5px;line-height:16.20px;color:#000;letter-spacing:0.511px;">Quick wavelength settings</div>
<div class="r" style="left:386px;top:693px;width:559px;height:25px;border:1px solid #aeaaa5;border-radius:3px;box-sizing:border-box;background:linear-gradient(#fcfcfb,#eeece9);"></div>
<div class="t" style="left:390.64px;top:697.88px;font-size:14.5px;line-height:16.20px;color:#000;letter-spacing:0.076px;">Sentinel-2 [bands 2, 3, 4, 5, 6, 7, 8, 8A, 11, 12]</div>
<svg class="r" style="left:930px;top:703px" width="8" height="5" viewBox="0 0 8 5"><path d="M0 0 H8 L4 4.5 Z" fill="#4c4c4c"/></svg>
<div class="t" style="left:951.24px;top:697.88px;font-size:14.5px;line-height:16.20px;color:#000;letter-spacing:0.538px;">Wavelength unit</div>
<div class="r" style="left:1069px;top:694px;width:190px;height:24px;border:1px solid #aeaaa5;border-radius:3px;box-sizing:border-box;background:linear-gradient(#fcfcfb,#eeece9);"></div>
<div class="t" style="left:1073.42px;top:697.88px;font-size:14.5px;line-height:16.20px;color:#000;letter-spacing:0.062px;">μm (1 E-6m)</div>
<svg class="r" style="left:1244px;top:703px" width="8" height="5" viewBox="0 0 8 5"><path d="M0 0 H8 L4 4.5 Z" fill="#4c4c4c"/></svg>
<div class="r" style="left:1265px;top:693px;width:27px;height:27px;border:1px solid #aeaaa5;border-radius:3px;box-sizing:border-box;background:linear-gradient(#fdfdfc,#eeece9);"></div>
<svg class="r" style="left:1265px;top:693px" width="27" height="27" viewBox="0 0 27 27"><rect x="2.3" y="2.3" width="21" height="21" rx="5" fill="#d6f8d6" stroke="#444" stroke-width="1.7"/><rect x="9.9" y="3.4" width="5.9" height="9.5" rx="1" fill="#000080"/><path d="M6.2 12.3 H19.7 L13 21.4 Z" fill="#000080"/></svg>
<div class="r" style="left:1298px;top:693px;width:27px;height:27px;border:1px solid #aeaaa5;border-radius:3px;box-sizing:border-box;background:linear-gradient(#fdfdfc,#eeece9);"></div>
<svg class="r" style="left:1298px;top:693px" width="27" height="27" viewBox="0 0 27 27"><rect x="2.3" y="2.3" width="21" height="21" rx="5" fill="#d6f8d6" stroke="#444" stroke-width="1.7"/><rect x="10.4" y="11" width="6" height="10" rx="1" fill="#c80000"/><path d="M6.2 11.5 H20.3 L13.3 3 Z" fill="#c80000"/></svg>
<div class="r" style="left:196px;top:762px;width:14px;height:14px;border:1px solid #b0aca7;border-radius:1px;box-sizing:border-box;background:#fff;"></div>
<svg class="r" style="left:196px;top:762px" width="14" height="14" viewBox="0 0 14 14"><path d="M3.3 6.6 L6 10.6 L10.9 3.4" fill="none" stroke="#000" stroke-width="2" stroke-linejoin="round"/></svg>
<div class="t" style="left:214.56px;top:761.88px;font-size:14.5px;line-height:16.20px;color:#000;letter-spacing:0.430px;">Create virtual raster of band set</div>
<div class="r" style="left:444px;top:762px;width:14px;height:14px;border:1px solid #b0aca7;border-radius:1px;box-sizing:border-box;background:#fff;"></div>
<div class="t" style="left:462.76px;top:761.88px;font-size:14.5px;line-height:16.20px;color:#000;letter-spacing:0.302px;">Create raster of band set (stack bands)</div>
<div class="r" style="left:738px;top:762px;width:14px;height:14px;border:1px solid #b0aca7;border-radius:1px;box-sizing:border-box;background:#fff;"></div>
<div class="t" style="left:756.81px;top:761.88px;font-size:14.5px;line-height:16.20px;color:#000;letter-spacing:0.405px;">Build band overviews</div>
<div class="r" style="left:914px;top:762px;width:14px;height:14px;border:1px solid #b0aca7;border-radius:1px;box-sizing:border-box;background:#fff;"></div>
<div class="t" style="left:932.81px;top:761.88px;font-size:14.5px;line-height:16.20px;color:#000;letter-spacing:0.147px;">Band calc expressions</div>
<div class="r" style="left:1229px;top:750px;width:90px;height:39px;border:1px solid #aeaaa5;border-radius:4px;box-sizing:border-box;background:linear-gradient(#fefefe,#efedea);"></div>
<div class="t" style="left:1236.73px;top:761.88px;font-size:14.5px;line-height:16.20px;color:#000;font-weight:bold;letter-spacing:0.566px;">RUN</div>
<svg class="r" style="left:1278px;top:750px" width="40" height="38" viewBox="0 0 40 38"><ellipse cx="16.7" cy="29.3" rx="12.5" ry="3.1" fill="#3c3c3c"/><ellipse cx="18" cy="19.8" rx="12.6" ry="5.2" transform="rotate(42 18 19.8)" fill="none" stroke="#c81010" stroke-width="5.6"/><ellipse cx="18.7" cy="18.9" rx="12.6" ry="5.2" transform="rotate(42 18.7 18.9)" fill="none" stroke="#2fc01f" stroke-width="5.6"/><ellipse cx="19.5" cy="18" rx="12.6" ry="5.2" transform="rotate(42 19.5 18)" fill="none" stroke="#2a7b92" stroke-width="5" stroke-dasharray="8 2"/></svg>
<svg class="r" style="left:1330px;top:795px" width="14" height="13" viewBox="0 0 14 13"><rect x="10" y="2" width="1" height="1" fill="#b8b4ae"/><rect x="7" y="5" width="1" height="1" fill="#b8b4ae"/><rect x="10" y="5" width="1" height="1" fill="#b8b4ae"/><rect x="4" y="8" width="1" height="1" fill="#b8b4ae"/><rect x="7" y="8" width="1" height="1" fill="#b8b4ae"/><rect x="10" y="8" width="1" height="1" fill="#b8b4ae"/><rect x="1" y="11" width="1" height="1" fill="#b8b4ae"/><rect x="4" y="11" width="1" height="1" fill="#b8b4ae"/><rect x="7" y="11" width="1" height="1" fill="#b8b4ae"/><rect x="10" y="11" width="1" height="1" fill="#b8b4ae"/></svg>
</body></html>
